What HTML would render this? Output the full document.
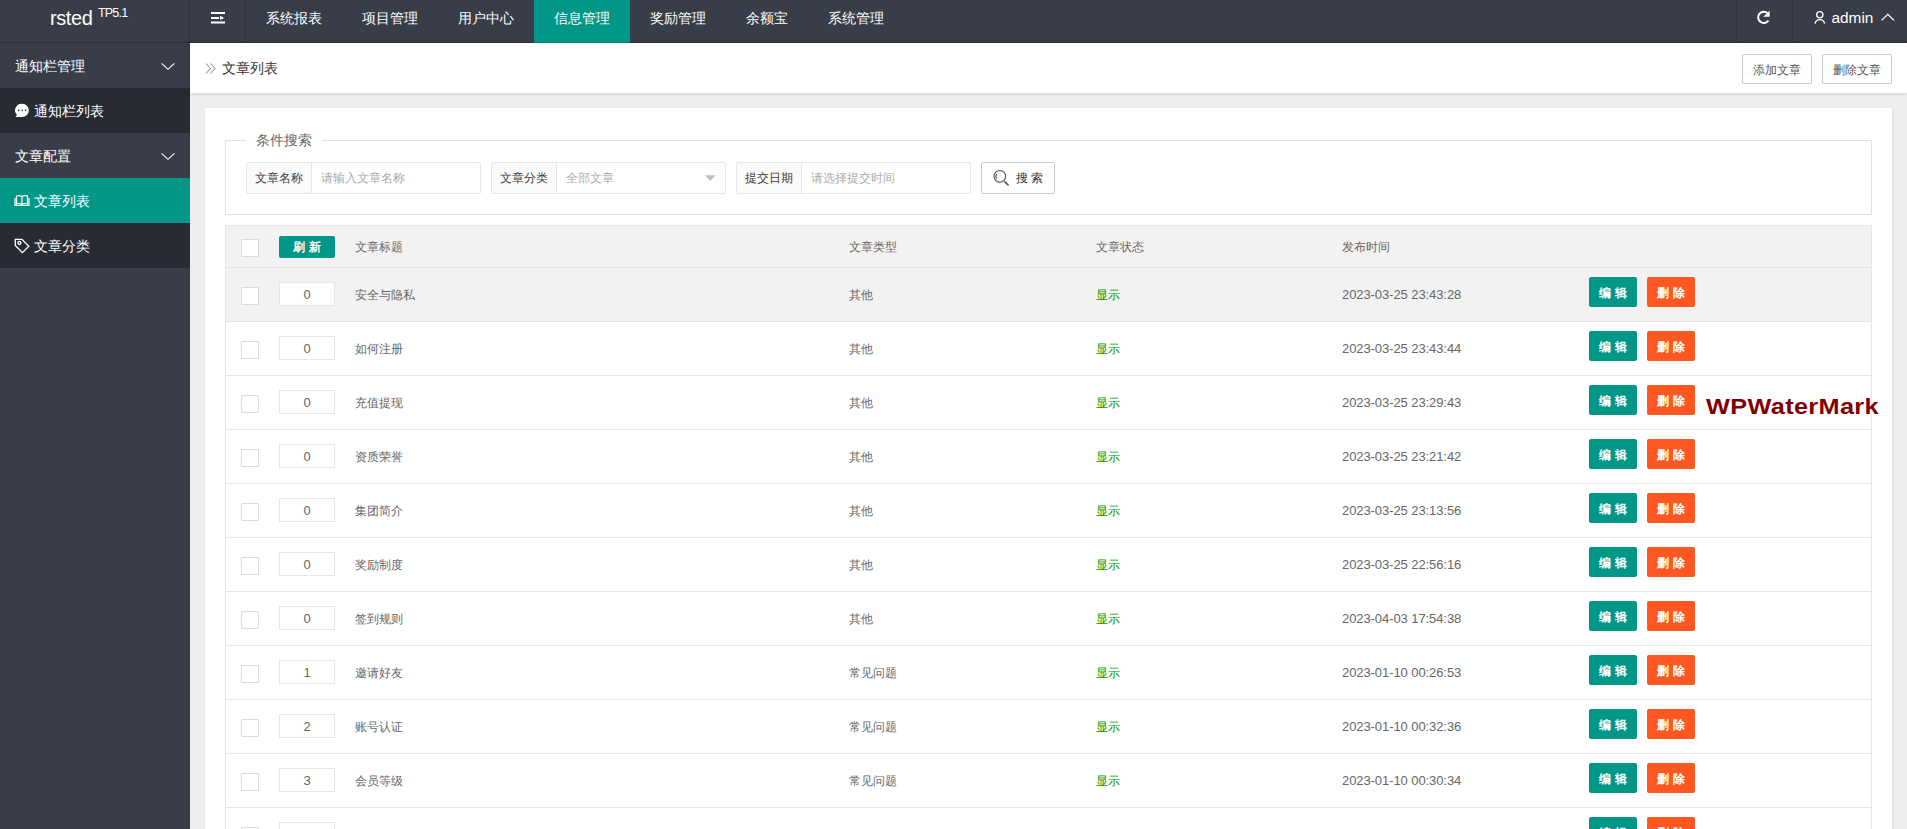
<!DOCTYPE html>
<html><head><meta charset="utf-8">
<style>
*{margin:0;padding:0;box-sizing:border-box}
html,body{width:1907px;height:829px;overflow:hidden;background:#eeeeee;font-family:"Liberation Sans",sans-serif;}
.abs{position:absolute}
svg{position:absolute;overflow:visible}
#header{position:absolute;left:0;top:0;width:1907px;height:43px;background:#393D49;border-bottom:1px solid #2c2f38}
.nav{position:absolute;top:0;height:42px;color:#fff;font-size:14px;line-height:36px;text-align:center;}
.nav.on{background:#009688;height:43px;box-shadow:inset 0 -1px 0 rgba(0,0,0,.07)}
.vsep{position:absolute;top:0;width:1px;height:42px;background:#2f323b}
#side{position:absolute;left:0;top:43px;width:190px;height:786px;background:#393D49;}
.si{position:absolute;left:0;width:190px;height:45px;color:#fff;font-size:14px;line-height:47px;}
.si.child{background:#282B33}
.si.on{background:#009688}
.si .tx{position:absolute;left:15px;top:0}
.si.child .tx{left:34px}
#crumb{position:absolute;left:190px;top:43px;width:1717px;height:50px;background:#fff;box-shadow:0 1px 4px rgba(0,0,0,.12);}
.obtn{position:absolute;top:11px;width:70px;height:30px;border:1px solid #c9c9c9;border-radius:2px;background:#fff;color:#555;font-size:12px;line-height:30px;text-align:center;}
#card{position:absolute;left:205px;top:108px;width:1687px;height:721px;background:#fff;box-shadow:1px 1px 3px rgba(0,0,0,.08);}
#fs{position:absolute;left:225px;top:140px;width:1647px;height:75px;border:1px solid #e2e2e2;}
#legend{position:absolute;left:246px;top:130px;width:76px;height:20px;background:#fff;color:#666;font-size:14px;line-height:20px;text-align:center;}
.ig{position:absolute;top:162px;width:235px;height:32px;border:1px solid #e6e6e6;border-radius:2px;background:#fff;}
.ig .lb{position:absolute;left:0;top:0;width:65px;height:30px;background:#fafafa;border-right:1px solid #e6e6e6;color:#3a3a3a;font-size:12px;line-height:31px;text-align:center;}
.ig .ph{position:absolute;left:74px;top:0;height:30px;color:#aaa;font-size:12px;line-height:30px;}
#sbtn{position:absolute;left:981px;top:162px;width:74px;height:32px;border:1px solid #c9c9c9;border-radius:2px;background:#fff;color:#333;font-size:12px;line-height:30px;}
#table{position:absolute;left:225px;top:225px;width:1647px;height:604px;border:1px solid #e6e6e6;border-bottom:none;background:#fff}
#thead{position:absolute;left:225px;top:225px;width:1647px;height:43px;background:#f2f2f2;border:1px solid #e6e6e6;}
.row{position:absolute;left:225px;width:1647px;height:54px;border:1px solid #e6e6e6;border-top:none;background:#fff}
.row.hl{background:#f2f2f2}
.cb{position:absolute;left:15px;width:18px;height:18px;border:1px solid #dcdcdc;background:#fff;border-radius:1px}
.sort{position:absolute;left:53px;width:56px;height:24px;border:1px solid #e6e6e6;background:#fff;color:#666;font-size:13px;line-height:23px;text-align:center}
.c{position:absolute;top:1px;height:53px;line-height:53px;color:#666;font-size:12px;}
.t1{left:129px} .t2{left:623px} .t3{left:870px} .t4{left:1116px}
.dt{font-size:13px;letter-spacing:-0.08px;top:0}
.green{color:#009900}
.btn{position:absolute;top:9px;width:48px;height:30px;border-radius:2px;color:#fff;font-size:12px;line-height:32px;text-align:center;font-weight:bold}
.edit{left:1363px;background:#009688}
.del{left:1421px;background:#FF5722}
#wm{position:absolute;left:1706px;top:394px;color:#800000;font-size:22px;font-weight:bold;letter-spacing:0.3px;transform:scaleX(1.15);transform-origin:0 0}

</style></head><body>
<div id="header">
 <span class="abs" style="left:50px;top:7px;font-size:20px;color:#fff;letter-spacing:-0.4px">rsted</span>
 <span class="abs" style="left:98px;top:6px;font-size:12.5px;color:#fff;letter-spacing:-0.8px">TP5.1</span>
 <div class="vsep" style="left:189px"></div>
 <svg style="left:0;top:0" width="1" height="1"><g fill="#fff"><rect x="211" y="12" width="14" height="2"/><rect x="211" y="17" width="8" height="2"/><path d="M220 15.7 L224.3 17.9 L220 20 Z"/><rect x="211" y="21.5" width="14" height="2"/></g></svg>
 <div class="vsep" style="left:245px"></div>
 <div class="nav" style="left:246px;width:96px">系统报表</div>
 <div class="nav" style="left:342px;width:96px">项目管理</div>
 <div class="nav" style="left:438px;width:96px">用户中心</div>
 <div class="nav on" style="left:534px;width:96px">信息管理</div>
 <div class="nav" style="left:630px;width:96px">奖励管理</div>
 <div class="nav" style="left:726px;width:82px">余额宝</div>
 <div class="nav" style="left:808px;width:96px">系统管理</div>
 <div class="vsep" style="left:1736px"></div>
 <div class="vsep" style="left:1792px"></div>
 <svg style="left:-1px;top:0.4px" width="1" height="1"><g fill="none" stroke="#fff" stroke-width="2"><path d="M1768.8 13.5 A5.6 5.6 0 1 0 1769.4 20.5"/></g><path d="M1764.2 16.8 L1770.6 10.8 L1770.6 16.8 Z" fill="#fff"/></svg>
 <svg style="left:0;top:0" width="1" height="1"><g fill="none" stroke="#fff" stroke-width="1.3"><circle cx="1819.8" cy="14.8" r="3.1"/><path d="M1815 23.6 A4.9 5 0 0 1 1824.6 23.6"/><path d="M1881.6 20.4 L1887.8 14.3 L1894 20.4"/></g></svg>
 <span class="abs" style="left:1831.5px;top:9px;font-size:15.4px;color:#fff">admin</span>
</div>
<div id="side">
 <div class="si" style="top:0"><span class="tx">通知栏管理</span></div>
 <div class="si child" style="top:45px"><span class="tx">通知栏列表</span></div>
 <div class="si" style="top:90px"><span class="tx">文章配置</span></div>
 <div class="si child on" style="top:135px"><span class="tx">文章列表</span></div>
 <div class="si child" style="top:180px"><span class="tx">文章分类</span></div>
 <svg style="left:0;top:-43px" width="1" height="1"><g fill="none" stroke="#fff" stroke-width="1.1"><path d="M161.6 63.3 L168 69.3 L174.4 63.3"/><path d="M161.6 153.3 L168 159.3 L174.4 153.3"/></g>
 <path d="M22.2 103.8 A6.6 6.6 0 1 1 22.2 117 L15.5 117 L17 115 A6.6 6.6 0 0 1 22.2 103.8 Z" fill="#fff"/>
 <g fill="#282B33"><circle cx="18.6" cy="110.4" r="0.8"/><circle cx="22.1" cy="110.4" r="0.8"/><circle cx="25.6" cy="110.4" r="0.8"/></g>
 <g fill="none" stroke="#fff" stroke-width="1.2"><path d="M15 198 L15 205.5 L22 205.5 L29 205.5 L29 198"/><path d="M16.5 196 Q19.5 195 22 196.5 Q24.5 195 27.5 196 L27.5 204 Q24.5 203 22 204.5 Q19.5 203 16.5 204 Z"/><path d="M22 196.5 L22 204.5"/></g>
 <g fill="none" stroke="#fff" stroke-width="1.3"><path d="M15.3 239.3 L22 239.3 L28.8 246.3 L22.4 252.6 L15.3 245.5 Z"/><circle cx="19.4" cy="243" r="1.5"/></g>
 </svg>
</div>
<div id="crumb">
 <svg style="left:-190px;top:-43px" width="1" height="1"><g fill="none" stroke="#999" stroke-width="1.1"><path d="M206 63.5 L210.5 68.5 L206 73.5"/><path d="M210.5 63.5 L215 68.5 L210.5 73.5"/></g></svg>
 <span class="abs" style="left:32px;top:0;line-height:50px;font-size:14px;color:#333">文章列表</span>
 <div class="obtn" style="left:1552px">添加文章</div>
 <div class="obtn" style="left:1632px">删除文章</div>
</div>
<div id="card"></div>
<div id="fs"></div>
<div id="legend">条件搜索</div>
<div class="ig" style="left:246px"><div class="lb">文章名称</div><div class="ph">请输入文章名称</div></div>
<div class="ig" style="left:491px"><div class="lb">文章分类</div><div class="ph">全部文章</div><svg style="left:-492px;top:-163px" width="1" height="1"><path d="M704.8 175.2 L715.6 175.2 L710.2 180.9 Z" fill="#c2c2c2"/></svg></div>
<div class="ig" style="left:736px"><div class="lb">提交日期</div><div class="ph">请选择提交时间</div></div>
<div id="sbtn"><svg style="left:-982px;top:-163px" width="1" height="1"><g fill="none" stroke="#555" stroke-width="1.1"><circle cx="999.8" cy="176.3" r="5.8"/><path d="M996.8 174 A3.5 3.5 0 0 0 996.8 178.5"/></g><path d="M1004.3 181.3 L1008.6 185.4" stroke="#555" stroke-width="1.6"/></svg><span class="abs" style="left:34px;top:0">搜 索</span></div>
<div id="table"></div>
<div id="thead">
 <div class="cb" style="top:13px"></div>
 <div class="abs" style="left:53px;top:10px;width:56px;height:22px;background:#009688;border-radius:2px;color:#fff;font-size:12px;line-height:22px;text-align:center;font-weight:bold">刷 新</div>
 <div class="c t1" style="height:41px;line-height:41px">文章标题</div>
 <div class="c t2" style="height:41px;line-height:41px">文章类型</div>
 <div class="c t3" style="height:41px;line-height:41px">文章状态</div>
 <div class="c t4" style="height:41px;line-height:41px">发布时间</div>
</div>
<div class="row hl" style="top:268px">
<div class="cb" style="top:19px"></div>
<div class="sort" style="top:14px">0</div>
<div class="c t1">安全与隐私</div><div class="c t2">其他</div><div class="c t3 green">显示</div><div class="c t4 dt">2023-03-25 23:43:28</div>
<div class="btn edit">编 辑</div><div class="btn del">删 除</div>
</div>
<div class="row" style="top:322px">
<div class="cb" style="top:19px"></div>
<div class="sort" style="top:14px">0</div>
<div class="c t1">如何注册</div><div class="c t2">其他</div><div class="c t3 green">显示</div><div class="c t4 dt">2023-03-25 23:43:44</div>
<div class="btn edit">编 辑</div><div class="btn del">删 除</div>
</div>
<div class="row" style="top:376px">
<div class="cb" style="top:19px"></div>
<div class="sort" style="top:14px">0</div>
<div class="c t1">充值提现</div><div class="c t2">其他</div><div class="c t3 green">显示</div><div class="c t4 dt">2023-03-25 23:29:43</div>
<div class="btn edit">编 辑</div><div class="btn del">删 除</div>
</div>
<div class="row" style="top:430px">
<div class="cb" style="top:19px"></div>
<div class="sort" style="top:14px">0</div>
<div class="c t1">资质荣誉</div><div class="c t2">其他</div><div class="c t3 green">显示</div><div class="c t4 dt">2023-03-25 23:21:42</div>
<div class="btn edit">编 辑</div><div class="btn del">删 除</div>
</div>
<div class="row" style="top:484px">
<div class="cb" style="top:19px"></div>
<div class="sort" style="top:14px">0</div>
<div class="c t1">集团简介</div><div class="c t2">其他</div><div class="c t3 green">显示</div><div class="c t4 dt">2023-03-25 23:13:56</div>
<div class="btn edit">编 辑</div><div class="btn del">删 除</div>
</div>
<div class="row" style="top:538px">
<div class="cb" style="top:19px"></div>
<div class="sort" style="top:14px">0</div>
<div class="c t1">奖励制度</div><div class="c t2">其他</div><div class="c t3 green">显示</div><div class="c t4 dt">2023-03-25 22:56:16</div>
<div class="btn edit">编 辑</div><div class="btn del">删 除</div>
</div>
<div class="row" style="top:592px">
<div class="cb" style="top:19px"></div>
<div class="sort" style="top:14px">0</div>
<div class="c t1">签到规则</div><div class="c t2">其他</div><div class="c t3 green">显示</div><div class="c t4 dt">2023-04-03 17:54:38</div>
<div class="btn edit">编 辑</div><div class="btn del">删 除</div>
</div>
<div class="row" style="top:646px">
<div class="cb" style="top:19px"></div>
<div class="sort" style="top:14px">1</div>
<div class="c t1">邀请好友</div><div class="c t2">常见问题</div><div class="c t3 green">显示</div><div class="c t4 dt">2023-01-10 00:26:53</div>
<div class="btn edit">编 辑</div><div class="btn del">删 除</div>
</div>
<div class="row" style="top:700px">
<div class="cb" style="top:19px"></div>
<div class="sort" style="top:14px">2</div>
<div class="c t1">账号认证</div><div class="c t2">常见问题</div><div class="c t3 green">显示</div><div class="c t4 dt">2023-01-10 00:32:36</div>
<div class="btn edit">编 辑</div><div class="btn del">删 除</div>
</div>
<div class="row" style="top:754px">
<div class="cb" style="top:19px"></div>
<div class="sort" style="top:14px">3</div>
<div class="c t1">会员等级</div><div class="c t2">常见问题</div><div class="c t3 green">显示</div><div class="c t4 dt">2023-01-10 00:30:34</div>
<div class="btn edit">编 辑</div><div class="btn del">删 除</div>
</div>
<div class="row" style="top:808px">
<div class="cb" style="top:19px"></div>
<div class="sort" style="top:14px">4</div>
<div class="c t1">公司简介</div><div class="c t2">常见问题</div><div class="c t3 green">显示</div><div class="c t4 dt">2023-01-10 00:30:34</div>
<div class="btn edit">编 辑</div><div class="btn del">删 除</div>
</div>
<div id="wm">WPWaterMark</div>

</body></html>
